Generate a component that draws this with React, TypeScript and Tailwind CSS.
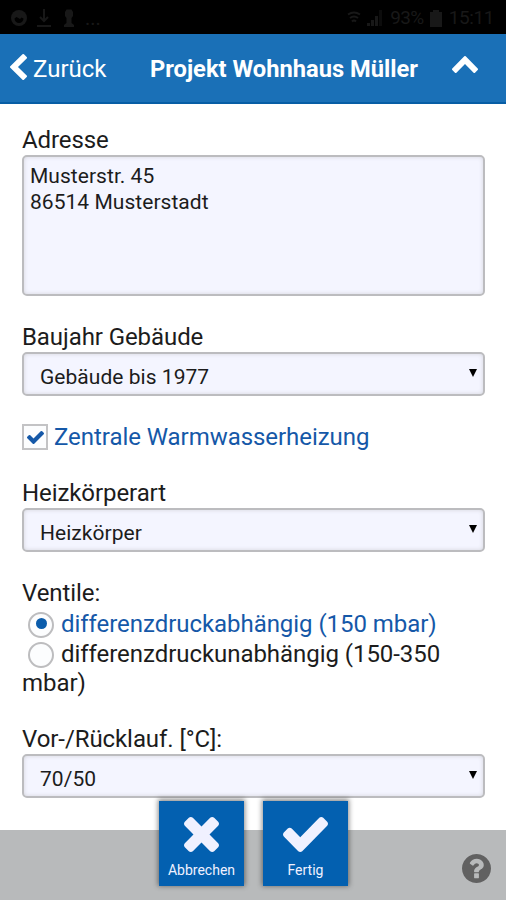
import type { ReactNode } from 'react'
import clsx from 'clsx'

const ICONS = {
  chevronLeft: {
    box: '410 26 1036 1612',
    d: 'M1427 301l-531 531 531 531q19 19 19 45t-19 45l-166 166q-19 19-45 19t-45-19l-742-742q-19-19-19-45t19-45l742-742q19-19 45-19t45 19l166 166q19 19 19 45t-19 45z',
  },
  chevronUp: {
    box: '90 480 1612 1035',
    d: 'M1683 1331l-166 165q-19 19-45 19t-45-19l-531-531-531 531q-19 19-45 19t-45-19l-166-165q-19-19-19-45.5t19-45.5l742-741q19-19 45-19t45 19l742 741q19 19 19 45.5t-19 45.5z',
  },
  times: {
    box: '110 366 1188 1188',
    d: 'M1298 1322q0 40-28 68l-136 136q-28 28-68 28t-68-28l-294-294-294 294q-28 28-68 28t-68-28l-136-136q-28-28-28-68t28-68l294-294-294-294q-28-28-28-68t28-68l136-136q28-28 68-28t68 28l294 294 294-294q28-28 68-28t68 28l136 136q28 28 28 68t-28 68l-294 294 294 294q28 28 28 68z',
  },
  check: {
    box: '121 334 1550 1188',
    d: 'M1671 566q0 40-28 68l-724 724-136 136q-28 28-68 28t-68-28l-136-136-362-362q-28-28-28-68t28-68l136-136q28-28 68-28t68 28l294 295 656-657q28-28 68-28t68 28l136 136q28 28 28 68z',
  },
  question: {
    box: '128 128 1536 1536',
    d: 'M1024 1376v-192q0-14-9-23t-23-9h-192q-14 0-23 9t-9 23v192q0 14 9 23t23 9h192q14 0 23-9t9-23zm256-672q0-88-55.5-163t-138.5-116-170-41q-243 0-371 213-15 24 8 42l132 100q7 6 19 6 16 0 25-12 53-68 86-92 34-24 86-24 48 0 85.5 26t37.5 59q0 38-20 61t-68 45q-63 28-115.5 86.5t-52.5 125.5v36q0 14 9 23t23 9h192q14 0 23-9t9-23q0-19 21.5-49.5t54.5-49.5q32-18 49-28.5t46-35 44.5-48 28-60.5 12.5-81zm384 192q0 209-103 385.5t-279.5 279.5-385.5 103-385.5-103-279.5-279.5-103-385.5 103-385.5 279.5-279.5 385.5-103 385.5 103 279.5 279.5 103 385.5z',
  },
}

function Icon({ name, className }: { name: keyof typeof ICONS; className: string }) {
  return (
    <svg viewBox={ICONS[name].box} preserveAspectRatio="none" fill="currentColor" className={clsx('shrink-0', className)}>
      <path d={ICONS[name].d} />
    </svg>
  )
}

function StatusBar() {
  return (
    <div className="flex h-[34px] shrink-0 items-center bg-black pt-0.5 pr-3 pl-[11px] text-[#181818]">
      <svg viewBox="0 0 16 16" className="h-4 w-4">
        <circle cx="8" cy="8" r="8" fill="currentColor" />
        <path d="M3.5 8.5a4.5 4.5 0 0 0 9 0L10.5 7.5 9 9 5.5 7z" fill="black" />
      </svg>
      <svg viewBox="0 0 14 18" className="ml-[10px] h-[18px] w-[14px]" fill="none" stroke="currentColor" strokeWidth="2">
        <path d="M7 0v12M3 8l4 4 4-4M0 17h14" />
      </svg>
      <svg viewBox="0 0 12 18" className="ml-3 h-[18px] w-3" fill="currentColor">
        <path d="M2 3l1.5-2.5h5L10 3v4L8.5 9v5l2.5 2v2h-10v-2l2.5-2V9L2 7z" />
      </svg>
      <span className="ml-[10px] text-xl leading-5">...</span>
      <div className="ml-auto flex items-center">
        <svg viewBox="0 0 14 14" className="h-[14px] w-[14px]" fill="none" stroke="currentColor" strokeWidth="2">
          <path d="M1 3.5q6-4 12 0M3 7q4-3 8 0M5 10.5q2-2 4 0" />
        </svg>
        <svg viewBox="0 0 16 16" className="ml-1.5 h-4 w-4" fill="currentColor">
          <path d="M0 13h3v3H0zM4 10h3v6H4zM8 6h3v10H8z" />
          <path d="M12 0h3v16h-3z" opacity=".5" />
        </svg>
        <span className="ml-[7px] text-[19px] leading-5 tracking-[-0.6px]">93%</span>
        <svg viewBox="0 0 12 17" className="ml-1.5 h-[17px] w-3" fill="currentColor">
          <path d="M3 0h6v2h3v15H0V2h3z" />
        </svg>
        <span className="ml-[7px] text-[19px] leading-5 tracking-[-0.4px]">15:11</span>
      </div>
    </div>
  )
}

const fieldBox = 'rounded-[5px] border-2 border-[#bcbcbf] bg-[#f4f5ff] shadow-[inset_0_0_4px_#d4d4dc]'

function SelectBox({ value }: { value: string }) {
  return (
    <div className={clsx('flex h-[44px] items-center justify-between pr-[6px] pl-4', fieldBox)}>
      <span className="pt-1.5 text-[21px] leading-6 tracking-[0.04px]">{value}</span>
      <svg viewBox="0 0 8 8" className="mb-[3px] h-2 w-2">
        <path d="M0 0h8L4 8z" />
      </svg>
    </div>
  )
}

function Label({ children }: { children: ReactNode }) {
  return <div className="h-[29px] text-[24px] leading-7 tracking-[-0.08px]">{children}</div>
}

function Radio({ checked }: { checked?: boolean }) {
  return (
    <span className="relative -top-px mr-[7px] ml-[6px] inline-flex h-[26px] w-[26px] items-center justify-center rounded-full border-2 border-[#bdbdbf] bg-[#fcfdfe] align-middle">
      {checked && <span className="mb-[3px] h-[11px] w-[11px] rounded-full bg-[#0b5cab]" />}
    </span>
  )
}

function ActionButton({ icon, label }: { icon: 'times' | 'check'; label: string }) {
  return (
    <button
      type="button"
      className="flex h-[85px] w-[85px] flex-col items-center bg-[#0360b0] pt-[16px] text-[#f0f1ff] shadow-[0_-1px_5px_1px_rgba(0,0,0,0.45)]"
    >
      <Icon name={icon} className={icon === 'times' ? 'h-[35px] w-[35px]' : 'h-[35px] w-[45px]'} />
      <span className="mt-2 text-[14px] leading-5">{label}</span>
    </button>
  )
}

export default function App() {
  return (
    <div className="flex h-[900px] w-[506px] flex-col overflow-hidden bg-white font-[Roboto,sans-serif] text-[#1c1c1c]">
      <StatusBar />
      <header className="flex h-[70px] shrink-0 items-center border-b-2 border-[#075ea5] bg-[#1a70b7] pr-7 pl-[10px] text-white">
        <Icon name="chevronLeft" className="mb-[3px] h-[26px] w-[17px]" />
        <span className="ml-[6px] w-[74px] pt-0.5 text-[24px] leading-7">Zurück</span>
        <h1 className="ml-[43px] pt-0.5 text-[23.7px] leading-7 font-bold">Projekt Wohnhaus Müller</h1>
        <Icon name="chevronUp" className="mb-2 ml-auto h-[17px] w-[26px]" />
      </header>

      <main className="flex h-[726px] shrink-0 flex-col pt-[22px] pr-[21px] pl-[22px]">
        <Label>Adresse</Label>
        <div className={clsx('h-[141px] px-[6px] pt-[6px] text-[21px] leading-[26px] tracking-[0.04px]', fieldBox)}>
          Musterstr. 45
          <br />
          86514 Musterstadt
        </div>

        <div className="mt-[27px]">
          <Label>Baujahr Gebäude</Label>
          <SelectBox value="Gebäude bis 1977" />
        </div>

        <div className="mt-[27px] flex h-7 items-center text-[#1558a8]">
          <span className="flex h-[26px] w-[26px] items-center justify-center border-2 border-[#c3c3c5] bg-[#fcfdfe]">
            <Icon name="check" className="h-[13px] w-[17px]" />
          </span>
          <span className="ml-[6px] text-[24px] leading-7 tracking-[-0.05px]">Zentrale Warmwasserheizung</span>
        </div>

        <div className="mt-[28px]">
          <Label>Heizkörperart</Label>
          <SelectBox value="Heizkörper" />
        </div>

        <div className="mt-[27px]">
          <Label>Ventile:</Label>
          <div className="mt-px h-[31px] text-[24px] leading-[30px] tracking-[-0.05px] text-[#1558a8]">
            <Radio checked />
            differenzdruckabhängig (150 mbar)
          </div>
          <div className="h-[61px] text-[24px] leading-[29px] tracking-[-0.05px]">
            <Radio />
            differenzdruckunabhängig (150-350 mbar)
          </div>
        </div>

        <div className="mt-[24px]">
          <Label>Vor-/Rücklauf. [°C]:</Label>
          <SelectBox value="70/50" />
        </div>
      </main>

      <footer className="relative h-[70px] shrink-0 bg-[#b8babb]">
        <div className="absolute -top-[29px] left-[159px] flex gap-[19px]">
          <ActionButton icon="times" label="Abbrechen" />
          <ActionButton icon="check" label="Fertig" />
        </div>
        <Icon name="question" className="absolute top-[24px] right-[15px] h-[29px] w-[29px] text-[#616161]" />
      </footer>
    </div>
  )
}
